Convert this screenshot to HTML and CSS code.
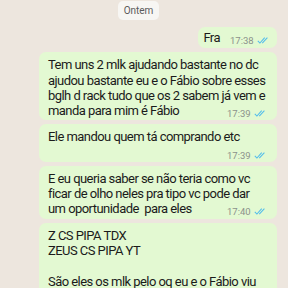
FILE: index.html
```html
<!DOCTYPE html>
<html lang="pt">
<head>
  <meta charset="UTF-8">
  <title>Conversa</title>
  <link rel="stylesheet" href="styles.css">
</head>
<body>
<div class="chat">
  <div class="day"><span>Ontem</span></div>

  <div class="msg short">
    Fra
    <span class="meta">17:38 <svg class="ticks" viewBox="0 0 16 10"><path d="M1 5.5l2.6 2.6L9.5 1.5M6.5 8.1L12.8 1.5" fill="none" stroke="#53bdeb" stroke-width="1.3"/></svg></span>
  </div>

  <div class="msg">
    Tem uns 2 mlk ajudando bastante no dc ajudou bastante eu e o Fábio sobre esses bglh d rack tudo que os 2 sabem já vem e manda para mim é Fábio
    <span class="meta">17:39 <svg class="ticks" viewBox="0 0 16 10"><path d="M1 5.5l2.6 2.6L9.5 1.5M6.5 8.1L12.8 1.5" fill="none" stroke="#53bdeb" stroke-width="1.3"/></svg></span>
  </div>

  <div class="msg">
    Ele mandou quem tá comprando etc
    <span class="meta">17:39 <svg class="ticks" viewBox="0 0 16 10"><path d="M1 5.5l2.6 2.6L9.5 1.5M6.5 8.1L12.8 1.5" fill="none" stroke="#53bdeb" stroke-width="1.3"/></svg></span>
  </div>

  <div class="msg">
    E eu queria saber se não teria como vc ficar de olho neles pra tipo vc pode dar um oportunidade&nbsp; para eles
    <span class="meta">17:40 <svg class="ticks" viewBox="0 0 16 10"><path d="M1 5.5l2.6 2.6L9.5 1.5M6.5 8.1L12.8 1.5" fill="none" stroke="#53bdeb" stroke-width="1.3"/></svg></span>
  </div>

  <div class="msg">
    Z CS PIPA TDX<br>
    ZEUS CS PIPA YT<br>
    <br>
    São eles os mlk pelo oq eu e o Fábio viu eles compraridos e consolidados
  </div>
</div>
</body>
</html>
```

FILE: styles.css
```css
* {
  box-sizing: border-box;
}
body {
  margin: 0;
  height: 288px;
  overflow: hidden;
  background: #ede6de;
  font-family: Roboto, "Noto Sans", sans-serif;
  color: #1b1b1b;
}
.chat {
  display: flex;
  flex-direction: column;
  align-items: flex-end;
  gap: 4px;
  padding: 1px 11px 0 0;
}
.day {
  align-self: center;
  margin-bottom: 3px;
}
.day span {
  display: block;
  background: #f7f6f3;
  color: #5b5b5b;
  font-size: 10px;
  line-height: 19px;
  padding: 0 6px;
  border-radius: 5px;
}
.msg {
  display: flow-root;
  max-width: 238px;
  background: #e3f9d2;
  border-radius: 7px;
  padding: 5px 10px 2px 9px;
  font-size: 13px;
  line-height: 15.3px;
  letter-spacing: -0.55px;
}
.msg.short {
  padding: 3px 7px 3px 5px;
}
.meta {
  float: right;
  margin: 4px 0 -2px 10px;
  font-size: 9.5px;
  line-height: 13px;
  letter-spacing: 0;
  color: #8c918b;
  white-space: nowrap;
}
.ticks {
  width: 13px;
  height: 9px;
  vertical-align: -1px;
  margin-left: 1px;
}
```
